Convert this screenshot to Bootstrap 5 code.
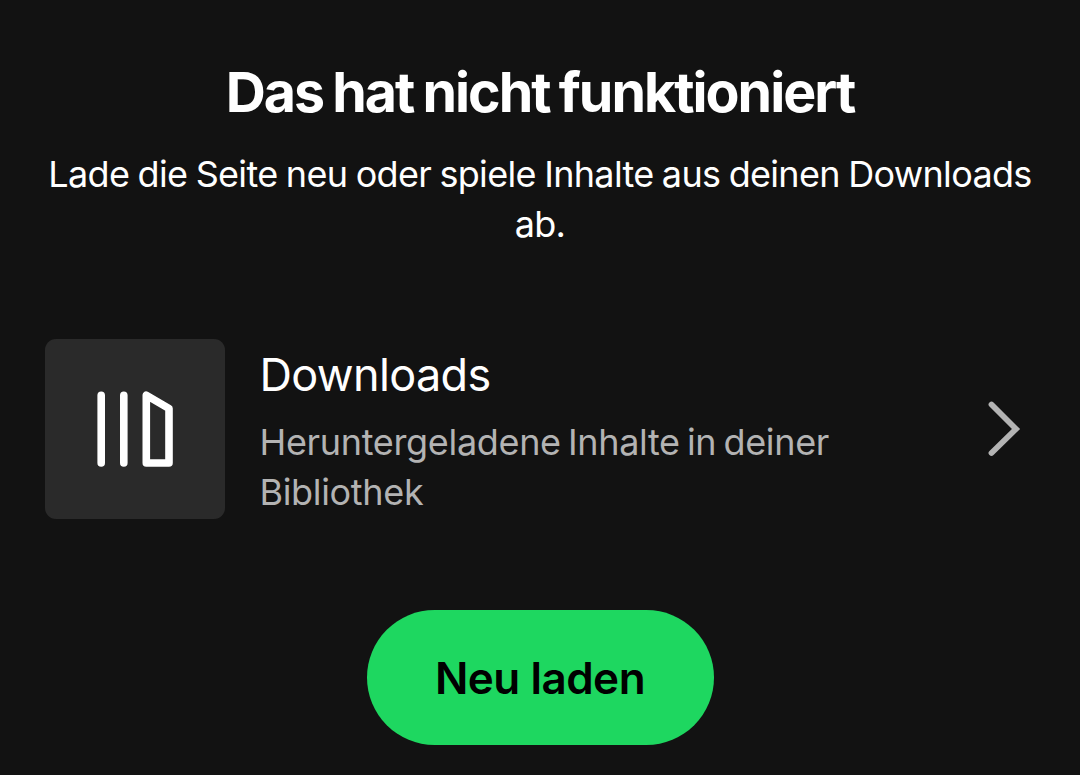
<!DOCTYPE html>
<html lang="de">
<head>
<meta charset="utf-8">
<meta name="viewport" content="width=device-width, initial-scale=1">
<title>Das hat nicht funktioniert</title>
<link href="https://cdn.jsdelivr.net/npm/bootstrap@5.3.0/dist/css/bootstrap.min.css" rel="stylesheet">
<style>
body{background:#121212;color:#fff;font-family:Inter,sans-serif;height:775px;overflow:hidden}
.screen{padding:62px 45px 0}
.title{font-size:55.5px;font-weight:700;line-height:60px;letter-spacing:-2px;word-spacing:-2px;white-space:nowrap}
.msg{font-size:36px;line-height:50px;margin-top:27px;letter-spacing:-.68px;word-spacing:-1.1px;white-space:nowrap}
.item-row{margin-top:90px;height:180px}
.tile{width:180px;height:180px;background:#2a2a2a;border-radius:11px}
.info{margin-left:34.5px;padding-top:4px}
.name{font-size:45px;line-height:60px;letter-spacing:-.65px}
.desc{font-size:36px;line-height:50px;color:#b3b3b3;margin-top:12px;letter-spacing:-.33px;word-spacing:-2.6px}
.reload{background:#1ed760;color:#000;width:347px;height:135px;font-size:44px;font-weight:600;letter-spacing:-.5px;margin-top:91px;border:0}
</style>
</head>
<body>
<main class="screen d-flex flex-column align-items-center text-center">
<h1 class="title m-0">Das hat nicht funktioniert</h1>
<p class="msg mb-0">Lade die Seite neu oder spiele Inhalte aus deinen Downloads<br>ab.</p>
<a class="item-row d-flex align-items-center w-100 text-start text-reset text-decoration-none" href="#">
<span class="tile d-block flex-shrink-0"><svg class="d-block" width="180" height="180" fill="none" stroke="#fff" stroke-width="7.6" stroke-linecap="round" stroke-linejoin="round"><path d="M56.2 56.2v67.8M78.8 56.2v67.8M101.3 56.2v67.8h22.7v-54.5z"/></svg></span>
<span class="info flex-grow-1"><span class="name d-block">Downloads</span><span class="desc d-block">Heruntergeladene Inhalte in deiner<br>Bibliothek</span></span>
<svg class="flex-shrink-0" width="50" height="60" fill="none" stroke="#b3b3b3" stroke-width="5.8" stroke-linecap="round"><path d="M6.5 5.5L31 30 6.5 54"/></svg>
</a>
<button class="reload btn rounded-pill" type="button">Neu laden</button>
</main>
<script src="https://cdn.jsdelivr.net/npm/bootstrap@5.3.0/dist/js/bootstrap.bundle.min.js"></script>
</body>
</html>
